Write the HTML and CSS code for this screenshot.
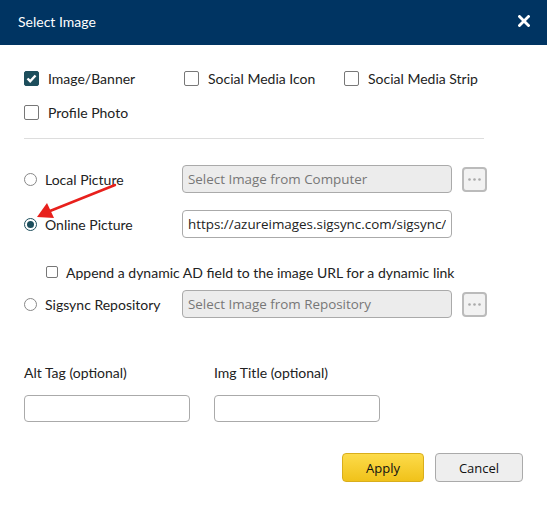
FILE: index.html
```html
<!DOCTYPE html>
<html>
<head>
<meta charset="utf-8">
<link rel="stylesheet" href="styles.css">
</head>
<body>
<div class="dialog">
  <header class="hdr">
    <span class="title">Select Image</span>
    <svg class="close" width="12" height="12" viewBox="0 0 12 12"><path d="M1.5 1.5 L10.5 10.5 M10.5 1.5 L1.5 10.5" stroke="#fff" stroke-width="2.8" stroke-linecap="square"/></svg>
  </header>
  <div class="content">
    <div class="types">
      <label class="chk"><span class="box checked"><svg width="11" height="9" viewBox="0 0 11 9"><path d="M1.5 4.5 L4.2 7.2 L9.5 1.5" fill="none" stroke="#fff" stroke-width="2.4"/></svg></span>Image/Banner</label>
      <label class="chk"><span class="box"></span>Social Media Icon</label>
      <label class="chk"><span class="box"></span>Social Media Strip</label>
      <label class="chk"><span class="box"></span>Profile Photo</label>
    </div>
    <div class="divider"></div>

    <div class="src-row first">
      <label class="rad"><span class="radio"></span>Local Picture</label>
      <input class="field disabled" placeholder="Select Image from Computer" disabled>
      <span class="dots"><svg width="13" height="3" viewBox="0 0 13 3"><circle cx="1.5" cy="1.5" r="1.3" fill="#aaa"/><circle cx="6.5" cy="1.5" r="1.3" fill="#aaa"/><circle cx="11.5" cy="1.5" r="1.3" fill="#aaa"/></svg></span>
    </div>
    <div class="src-row second">
      <label class="rad"><span class="radio on"></span>Online Picture</label>
      <input class="field" value="https://azureimages.sigsync.com/sigsync/sigsync/image.png" readonly>
    </div>
    <label class="dyn"><span class="sbox"></span>Append a dynamic AD field to the image URL for a dynamic link</label>
    <div class="src-row">
      <label class="rad"><span class="radio"></span>Sigsync Repository</label>
      <input class="field disabled" placeholder="Select Image from Repository" disabled>
      <span class="dots"><svg width="13" height="3" viewBox="0 0 13 3"><circle cx="1.5" cy="1.5" r="1.3" fill="#aaa"/><circle cx="6.5" cy="1.5" r="1.3" fill="#aaa"/><circle cx="11.5" cy="1.5" r="1.3" fill="#aaa"/></svg></span>
    </div>

    <div class="meta">
      <div class="meta-col">
        <span class="meta-lbl">Alt Tag (optional)</span>
        <input class="meta-in">
      </div>
      <div class="meta-col">
        <span class="meta-lbl">Img Title (optional)</span>
        <input class="meta-in">
      </div>
    </div>

    <div class="actions">
      <button class="btn apply">Apply</button>
      <button class="btn cancel">Cancel</button>
    </div>
  </div>
  <svg class="arrow" width="547" height="507" viewBox="0 0 547 507">
    <path d="M115 185 L50 211" stroke="#e8201c" stroke-width="2.5" stroke-linecap="round"/>
    <path d="M37 217 L47 203 L54 218 Z" fill="#e8201c"/>
  </svg>
</div>
</body>
</html>
```

FILE: styles.css
```css
* { box-sizing: border-box; }
html, body { margin: 0; padding: 0; background: #fff; }
body { font-family: Lato, "Open Sans", sans-serif; font-size: 14px; color: #222; }
.dialog { position: relative; width: 547px; height: 507px; }
.hdr {
  height: 45px; background: #003462; color: #fff;
  display: flex; align-items: center; justify-content: space-between;
  padding: 0 17px 3px 18px;
}
.title { font-size: 14px; }
.close { display: block; margin-top: -1px; }
.content { padding: 16px 24px 0 24px; }
.types {
  display: grid; grid-template-columns: 160px 160px 140px;
  grid-auto-rows: 34px;
}
.chk { display: flex; align-items: center; gap: 9px; white-space: nowrap; }
.box {
  width: 15px; height: 15px; border: 1px solid #777; border-radius: 2px;
  display: flex; align-items: center; justify-content: center; flex: none;
  background: #fff;
}
.box.checked { background: #1d4e5c; border-color: #1d4e5c; }
.box svg { display: block; }
.divider { height: 1px; background: #ddd; width: 460px; margin-top: 9px; }
.src-row { display: flex; align-items: center; height: 28px; }
.src-row.first { margin-top: 26px; }
.src-row.second { margin-top: 17px; }
.rad { width: 158px; display: flex; align-items: center; gap: 8px; flex: none; white-space: nowrap; }
.radio {
  width: 13px; height: 13px; border-radius: 50%; border: 1px solid #888;
  background: #fff; flex: none; position: relative;
}
.radio.on { border-color: #1d4e5c; }
.radio.on::after {
  content: ""; position: absolute; left: 2px; top: 2px; width: 7px; height: 7px;
  border-radius: 50%; background: #1d4e5c;
}
.field {
  width: 270px; height: 28px; border: 1px solid #aaa; border-radius: 4px;
  font-family: "Open Sans", sans-serif; font-size: 13.4px; color: #222;
  padding: 0 5px; margin: 0; background: #fff; outline: none;
}
.field.disabled { background: #ececec; }
.field::placeholder { color: #777; opacity: 1; }
.dots {
  width: 25px; height: 25px; margin-left: 10px; border: 2px solid #bbb; border-radius: 4px;
  background: #f2f2f2; display: flex; align-items: center; justify-content: center;
}
.dots svg { display: block; }
.dyn {
  display: flex; align-items: center; gap: 8px; height: 20px;
  margin: 24px 0 8px 22px; white-space: nowrap;
}
.sbox { width: 12px; height: 12px; border: 1px solid #777; border-radius: 2px; background: #fff; flex: none; }
.meta { display: flex; gap: 24px; margin-top: 46px; }
.meta-col { display: flex; flex-direction: column; gap: 14px; }
.meta-lbl { line-height: 17px; }
.meta-in { width: 166px; height: 27px; border: 1px solid #aaa; border-radius: 4px; background: #fff; margin: 0; padding: 0 5px; outline: none; }
.actions { display: flex; justify-content: flex-end; gap: 11px; margin-top: 31px; }
.btn {
  height: 29px; border-radius: 4px; font-family: "Open Sans", sans-serif; font-size: 13px;
  color: #111; padding: 0; cursor: pointer;
}
.apply { width: 82px; background: linear-gradient(#fddb4a, #f0c21a); border: 1px solid #d9ae1c; }
.cancel { width: 88px; background: #eeeeee; border: 1px solid #aaa; }
.arrow { position: absolute; left: 0; top: 0; pointer-events: none; }
```
